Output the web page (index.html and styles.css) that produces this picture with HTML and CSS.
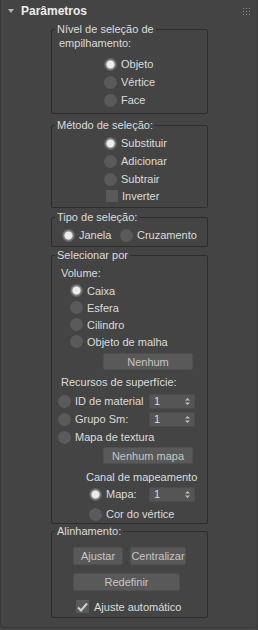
FILE: index.html
```html
<!DOCTYPE html>
<html lang="pt">
<head>
    <meta charset="UTF-8">
    <title>Parâmetros</title>
    <link rel="stylesheet" href="styles.css">
</head>
<body>
<div class="panel">
    <div class="head">
        <span class="tri"></span>
        <span class="title">Parâmetros</span>
        <svg class="grip" width="7" height="7" viewBox="0 0 7 7">
            <rect x="0" y="0" width="1" height="1"/><rect x="3" y="0" width="1" height="1"/><rect x="6" y="0" width="1" height="1"/>
            <rect x="0" y="3" width="1" height="1"/><rect x="3" y="3" width="1" height="1"/><rect x="6" y="3" width="1" height="1"/>
            <rect x="0" y="6" width="1" height="1"/><rect x="3" y="6" width="1" height="1"/><rect x="6" y="6" width="1" height="1"/>
        </svg>
    </div>

    <fieldset class="grp g1">
        <legend>Nível de seleção de</legend>
        <div class="sub">empilhamento:</div>
        <div class="opts">
            <div class="opt"><span class="radio on"></span>Objeto</div>
            <div class="opt"><span class="radio"></span>Vértice</div>
            <div class="opt"><span class="radio"></span>Face</div>
        </div>
    </fieldset>

    <fieldset class="grp g2">
        <legend>Método de seleção:</legend>
        <div class="opts">
            <div class="opt"><span class="radio on"></span>Substituir</div>
            <div class="opt"><span class="radio"></span>Adicionar</div>
            <div class="opt"><span class="radio"></span>Subtrair</div>
            <div class="opt chk-row"><span class="check"></span>Inverter</div>
        </div>
    </fieldset>

    <fieldset class="grp g3">
        <legend>Tipo de seleção:</legend>
        <div class="inline">
            <div class="opt first"><span class="radio on"></span>Janela</div>
            <div class="opt"><span class="radio"></span>Cruzamento</div>
        </div>
    </fieldset>

    <fieldset class="grp g4">
        <legend>Selecionar por</legend>
        <div class="sub">Volume:</div>
        <div class="vol">
            <div class="opt"><span class="radio on"></span>Caixa</div>
            <div class="opt"><span class="radio"></span>Esfera</div>
            <div class="opt"><span class="radio"></span>Cilindro</div>
            <div class="opt"><span class="radio"></span>Objeto de malha</div>
        </div>
        <div class="btn wide b-none">Nenhum</div>
        <div class="sub recursos">Recursos de superfície:</div>
        <div class="surf">
            <div class="opt"><span class="radio"></span>ID de material<span class="spin">1<svg width="5" height="9" viewBox="0 0 5 9"><path d="M0 3.5L2.5 1L5 3.5ZM0 5.5L2.5 8L5 5.5Z"/></svg></span></div>
            <div class="opt"><span class="radio"></span>Grupo Sm:<span class="spin">1<svg width="5" height="9" viewBox="0 0 5 9"><path d="M0 3.5L2.5 1L5 3.5ZM0 5.5L2.5 8L5 5.5Z"/></svg></span></div>
            <div class="opt"><span class="radio"></span>Mapa de textura</div>
        </div>
        <div class="btn wide b-map">Nenhum mapa</div>
        <div class="sub canal">Canal de mapeamento</div>
        <div class="chan">
            <div class="opt"><span class="radio on"></span>Mapa:<span class="spin">1<svg width="5" height="9" viewBox="0 0 5 9"><path d="M0 3.5L2.5 1L5 3.5ZM0 5.5L2.5 8L5 5.5Z"/></svg></span></div>
            <div class="opt cor"><span class="radio"></span>Cor do vértice</div>
        </div>
    </fieldset>

    <fieldset class="grp g5">
        <legend>Alinhamento:</legend>
        <div class="btns">
            <div class="btn b-fit">Ajustar</div>
            <div class="btn b-center">Centralizar</div>
        </div>
        <div class="btn b-reset">Redefinir</div>
        <div class="opt auto"><span class="check on"><svg width="11" height="10" viewBox="0 0 11 10"><path d="M1 5.5L4 8.5L10 1.5" fill="none" stroke="#cfcfcf" stroke-width="2"/></svg></span>Ajuste automático</div>
    </fieldset>
</div>
</body>
</html>
```

FILE: styles.css
```css
body {
    margin: 0;
    background-color: #444444;
    font-family: "Liberation Sans", Arial, sans-serif;
    font-size: 11px;
    color: #dcdcdc;
}
.panel {
    width: 258px;
    height: 628px;
    box-sizing: border-box;
    border: 1px solid #393939;
    border-top: none;
    border-radius: 0 0 3px 3px;
}
.head {
    height: 22px;
    display: flex;
    align-items: center;
}
.tri {
    width: 0;
    height: 0;
    margin-left: 7px;
    border-left: 3px solid transparent;
    border-right: 3px solid transparent;
    border-top: 4px solid #b5b5b5;
}
.title {
    margin-left: 7px;
    font-size: 12px;
    font-weight: bold;
    color: #ececec;
}
.grip {
    margin-left: auto;
    margin-right: 7px;
    fill: #8a8a8a;
}
.grp {
    margin: 0 0 0 50px;
    width: 157px;
    box-sizing: border-box;
    padding: 0;
    min-width: 0;
    border: 1px solid #2d2d2d;
    border-radius: 2px;
}
.grp legend {
    margin-left: 3px;
    padding: 0 2px;
    line-height: 14px;
}
.sub {
    line-height: 14px;
    padding-left: 7px;
}
.opt {
    display: flex;
    align-items: center;
    height: 18px;
}
.radio {
    width: 13px;
    height: 13px;
    border-radius: 50%;
    background: #5a5a5a;
    margin-right: 4px;
    flex: none;
}
.radio.on {
    background: radial-gradient(circle, #ececec 0, #ececec 3.5px, #8a8a8a 4.5px, #6a6a6a 5.5px, #5a5a5a 6.5px);
}
.check {
    width: 12px;
    height: 12px;
    background: #5a5a5a;
    margin: 0 4px 0 2px;
    flex: none;
    display: flex;
    align-items: center;
    justify-content: center;
}
.g1 .opts {
    margin-top: 5px;
    padding: 0 0 4px 52px;
}
.g2 {
    margin-top: 4px;
}
.g2 .opts {
    margin-top: 2px;
    padding: 0 0 3px 52px;
}
.g2 .chk-row {
    height: 16px;
}
.g3 {
    margin-top: 2px;
}
.inline {
    display: flex;
    padding: 2px 0 2px 10px;
}
.inline .first {
    width: 58px;
}
.g4 {
    margin-top: 1px;
}
.g4 .sub {
    padding-left: 9px;
}
.g4 > .sub:first-of-type {
    margin-top: 4px;
}
.vol {
    padding: 2px 0 0 18px;
}
.vol .opt {
    height: 17px;
}
.btn {
    height: 17px;
    box-sizing: border-box;
    background: #595959;
    border: 1px solid #4f4f4f;
    border-radius: 2px;
    color: #c6c6c6;
    display: flex;
    align-items: center;
    justify-content: center;
}
.wide {
    width: 90px;
    margin-left: 51px;
}
.b-none {
    margin-top: 3px;
}
.recursos {
    margin-top: 5px;
}
.surf {
    padding: 3px 12px 0 6px;
}
.spin {
    margin-left: auto;
    width: 46px;
    height: 15px;
    box-sizing: border-box;
    background: #555555;
    border: 1px solid #4c4c4c;
    display: flex;
    align-items: center;
    padding: 0 4px 0 4px;
    justify-content: space-between;
}
.spin svg {
    fill: #bdbdbd;
}
.b-map {
    margin-top: 1px;
}
.canal {
    margin-top: 6px;
}
.g4 .canal {
    padding-left: 34px;
}
.chan {
    padding: 1px 12px 1px 37px;
}
.chan .cor {
    margin-top: 3px;
    height: 16px;
}
.g5 {
    margin-top: 0;
    height: 94px;
}
.btns {
    display: flex;
    gap: 7px;
    margin: 9px 0 0 21px;
}
.g5 .btn {
    height: 18px;
}
.b-fit {
    width: 50px;
}
.b-center {
    width: 56px;
}
.b-reset {
    width: 107px;
    margin: 8px 0 0 21px;
}
.auto {
    margin-top: 8px;
    height: 15px;
    padding-left: 22px;
}
.auto .check {
    width: 13px;
    height: 13px;
    margin-right: 5px;
}
```
